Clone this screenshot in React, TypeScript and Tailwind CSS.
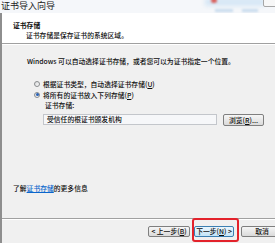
import React from "react";

function Radio({ checked }: { checked?: boolean }) {
  return (
    <span className="relative inline-flex w-[6px] h-[6px] shrink-0 rounded-full border border-[#8a8c8e] bg-gradient-to-br from-[#d9dadb] to-[#fbfbfb] items-center justify-center">
      {checked && <span className="w-[3px] h-[3px] rounded-full bg-[#2a63b8]" />}
    </span>
  );
}

function Btn({ children, hot, w }: { children: React.ReactNode; hot?: boolean; w: string }) {
  return (
    <div
      className={
        "h-[11px] shrink-0 flex items-center justify-center rounded-[2px] border text-[6.8px] leading-[9px] " +
        w +
        (hot
          ? " border-[#3c7fb1] bg-gradient-to-b from-[#eaf6fd] to-[#c4e5f8]"
          : " border-[#7f7f7f] bg-gradient-to-b from-[#f6f6f6] to-[#dadada]")
      }
    >
      {children}
    </div>
  );
}

export default function App() {
  return (
    <div className="relative w-[275px] h-[243px] overflow-hidden bg-[#f0f0f0] text-[#0c0c0c] font-medium font-['Noto_Sans_CJK_SC','Noto_Sans',sans-serif]">
      {/* title bar */}
      <div className="relative h-[13px] bg-[#f5f7fa] overflow-hidden">
        <div className="absolute left-[205px] top-[-2px] w-[60px] h-[8px] bg-[#d6e7f5] blur-[2px]" />
        <div className="absolute left-[211px] top-[-2px] w-[6px] h-[5px] rounded-full bg-[#d9605c] blur-[1px]" />
        <div className="absolute left-[215px] top-[9px] w-[18px] h-[3px] bg-[#c9dcee] blur-[1px]" />
        <div className="absolute left-[242px] top-[9px] w-[16px] h-[3px] bg-[#c9dcee] blur-[1px]" />
        <div className="absolute left-[263px] top-[-3px] w-[16px] h-[10px] rounded-[2px] border border-[#a6a6a6] bg-[#f7f7f7]" />
        <span className="relative block pl-[1px] text-[9px] leading-[12px] font-normal text-[#222]">证书导入向导</span>
      </div>

      <div className="flex h-[230px]">
        <div className="w-[2px] shrink-0 bg-[#8e8e8e]" />
        <div className="flex-1 flex flex-col min-w-0">
          {/* header */}
          <div className="h-[31px] shrink-0 bg-white border-b border-[#a0a0a0] pl-[11px] pt-[6.5px]">
            <div className="text-[6.8px] leading-[10px] font-bold">证书存储</div>
            <div className="text-[6.8px] leading-[10px] pl-[13px]">证书存储是保存证书的系统区域。</div>
          </div>

          {/* body */}
          <div className="h-[174px] shrink-0 border-t border-white flex flex-col text-[6.8px]">
            <div className="mt-[10.5px] pl-[25px] leading-[10px] whitespace-nowrap">
              Windows 可以自动选择证书存储，或者您可以为证书指定一个位置。
            </div>
            <div className="mt-[12.5px] pl-[32px] flex flex-col">
              <div className="h-[11px] flex items-center gap-[3px] whitespace-nowrap">
                <Radio />
                <span className="leading-[10px]">
                  根据证书类型，自动选择证书存储(<span className="underline">U</span>)
                </span>
              </div>
              <div className="h-[11px] flex items-center gap-[3px] whitespace-nowrap">
                <Radio checked />
                <span className="leading-[10px]">
                  将所有的证书放入下列存储(<span className="underline">P</span>)
                </span>
              </div>
            </div>
            <div className="pl-[43px] leading-[10px]">证书存储:</div>
            <div className="mt-[4px] pl-[41px] flex items-start gap-[6px]">
              <div className="w-[174px] h-[11px] border border-[#c3c6cb] bg-[#f6f7f9] pl-[3px] leading-[9px] whitespace-nowrap">
                受信任的根证书颁发机构
              </div>
              <Btn w="w-[41px] !h-[12px]">
                浏览(<span className="underline">R</span>)...
              </Btn>
            </div>
            <div className="flex-1" />
            <div className="pl-[11px] pb-[25px] leading-[10px] whitespace-nowrap">
              了解<span className="text-[#0a66cc] underline">证书存储</span>的更多信息
            </div>
          </div>

          {/* footer */}
          <div className="h-[25px] shrink-0 border-t border-[#a0a0a0]">
            <div className="h-[1px] bg-white" />
            <div className="pt-[6px] pl-[146px] flex items-start">
              <Btn w="w-[42px]">
                &lt; 上一步(<span className="underline">B</span>)
              </Btn>
              <div className="w-[4px] shrink-0" />
              <Btn w="w-[40px]" hot>
                下一步(<span className="underline">N</span>) &gt;
              </Btn>
              <div className="w-[7px] shrink-0" />
              <Btn w="w-[42px]">取消</Btn>
            </div>
          </div>
        </div>
      </div>

      {/* red annotation box */}
      <div className="absolute left-[192px] top-[218px] w-[47px] h-[24px] border-2 border-[#e3222b] rounded-[3px]" />
    </div>
  );
}
